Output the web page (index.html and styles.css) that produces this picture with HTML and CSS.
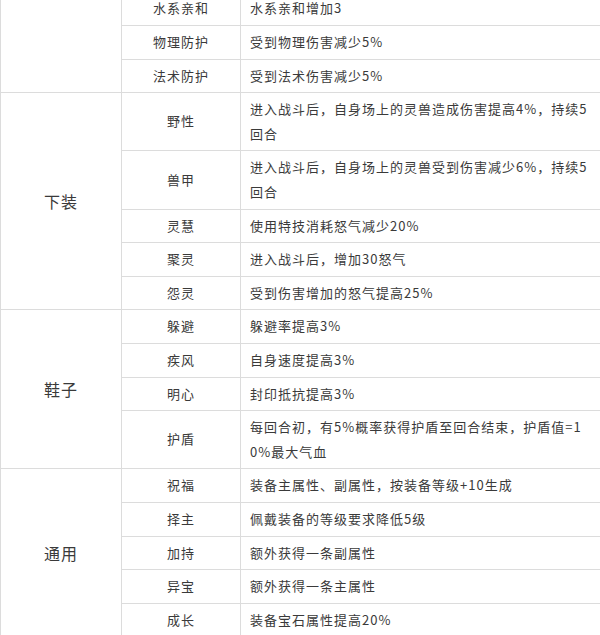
FILE: index.html
```html
<!DOCTYPE html>
<html lang="zh">
<head>
<meta charset="utf-8">
<link rel="stylesheet" href="styles.css">
</head>
<body>
<div class="wrap">
<table class="attr-table">
  <colgroup>
    <col class="c-part">
    <col class="c-name">
    <col class="c-desc">
  </colgroup>
  <tbody>
    <tr><td class="part" rowspan="3"></td><td class="name">水系亲和</td><td class="desc">水系亲和增加3</td></tr>
    <tr><td class="name">物理防护</td><td class="desc">受到物理伤害减少5%</td></tr>
    <tr><td class="name">法术防护</td><td class="desc">受到法术伤害减少5%</td></tr>

    <tr><td class="part" rowspan="5">下装</td><td class="name">野性</td><td class="desc">进入战斗后，自身场上的灵兽造成伤害提高4%，持续5回合</td></tr>
    <tr><td class="name">兽甲</td><td class="desc">进入战斗后，自身场上的灵兽受到伤害减少6%，持续5回合</td></tr>
    <tr><td class="name">灵慧</td><td class="desc">使用特技消耗怒气减少20%</td></tr>
    <tr><td class="name">聚灵</td><td class="desc">进入战斗后，增加30怒气</td></tr>
    <tr><td class="name">怨灵</td><td class="desc">受到伤害增加的怒气提高25%</td></tr>

    <tr><td class="part" rowspan="4">鞋子</td><td class="name">躲避</td><td class="desc">躲避率提高3%</td></tr>
    <tr><td class="name">疾风</td><td class="desc">自身速度提高3%</td></tr>
    <tr><td class="name">明心</td><td class="desc">封印抵抗提高3%</td></tr>
    <tr><td class="name">护盾</td><td class="desc">每回合初，有5%概率获得护盾至回合结束，护盾值=10%最大气血</td></tr>

    <tr><td class="part" rowspan="5">通用</td><td class="name">祝福</td><td class="desc">装备主属性、副属性，按装备等级+10生成</td></tr>
    <tr><td class="name">择主</td><td class="desc">佩戴装备的等级要求降低5级</td></tr>
    <tr><td class="name">加持</td><td class="desc">额外获得一条副属性</td></tr>
    <tr><td class="name">异宝</td><td class="desc">额外获得一条主属性</td></tr>
    <tr><td class="name">成长</td><td class="desc">装备宝石属性提高20%</td></tr>
  </tbody>
</table>
</div>
</body>
</html>
```

FILE: styles.css
```css
html, body {
  margin: 0;
  padding: 0;
  background: #fff;
}
body {
  width: 600px;
  height: 635px;
  overflow: hidden;
  font-family: "Noto Sans CJK SC", "Microsoft YaHei", sans-serif;
  color: #3a3a3a;
}
.wrap {
  margin-top: -8.6px;
}
.attr-table {
  border-collapse: collapse;
  table-layout: fixed;
  width: 601px;
}
.c-part { width: 121px; }
.c-name { width: 119px; }
.c-desc { width: 361px; }
.attr-table td {
  border: 1px solid #dcdcdc;
  padding: 4px 10px;
  font-size: 13px;
  line-height: 24.6px;
  letter-spacing: 1px;
  vertical-align: middle;
  word-break: break-all;
}
.attr-table td.part {
  font-size: 16px;
  text-align: center;
  padding: 0;
}
.attr-table td.name {
  text-align: center;
  padding-left: 0;
  padding-right: 0;
}
.attr-table td.desc {
  text-align: left;
  padding-left: 9px;
  padding-right: 8px;
}
```
